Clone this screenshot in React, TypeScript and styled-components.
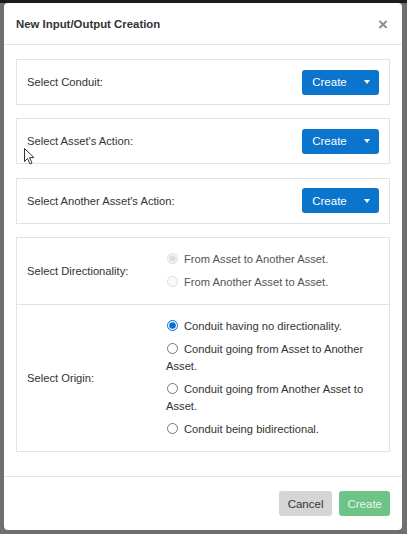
import React from 'react';
import styled, { createGlobalStyle } from 'styled-components';

const GlobalStyle = createGlobalStyle`
  html, body {
    margin: 0;
    padding: 0;
    background: #6f6f6f;
  }
  body {
    font-family: "Liberation Sans", Arial, sans-serif;
    color: #333;
  }
`;

const Backdrop = styled.div`
  position: relative;
  height: 534px;
  box-sizing: border-box;
  padding: 3px 5px 4px 4px;
  background: linear-gradient(#1c1c1c 0 3px, #6f6f6f 3px);
`;

const Modal = styled.div`
  display: flex;
  flex-direction: column;
  height: 100%;
  background: #fff;
  border-radius: 4px;
  overflow: hidden;
`;

const Header = styled.div`
  display: flex;
  align-items: center;
  justify-content: space-between;
  height: 42px;
  padding: 1px 14px 0 12px;
  box-sizing: border-box;
  border-bottom: 1px solid #e5e5e5;
`;

const Title = styled.h4`
  margin: 0;
  font-size: 11.4px;
  font-weight: bold;
  color: #333;
`;

const Close = styled.span`
  font-size: 17px;
  font-weight: bold;
  color: #8a8a8a;
  line-height: 1;
`;

const Body = styled.div`
  flex: 1;
  display: flex;
  flex-direction: column;
  gap: 13.3px;
  padding: 14px 12px 12px;
`;

const Panel = styled.div`
  display: flex;
  align-items: center;
  justify-content: space-between;
  height: 44px;
  padding: 0 10px 0 10px;
  border: 1px solid #e3e3e3;
`;

const Label = styled.span`
  font-size: 11.2px;
  color: #333;
`;

const Split = styled.div`
  display: flex;
  height: 25px;
  border-radius: 3px;
  overflow: hidden;
  background: #0b74cc;
`;

const SplitMain = styled.button`
  border: 0;
  background: transparent;
  color: #fff;
  font-family: inherit;
  font-size: 11.5px;
  width: 53px;
  padding: 0 0 0 2px;
`;

const SplitCaret = styled.button`
  border: 0;
  background: transparent;
  width: 24px;
  padding: 0;
  display: flex;
  align-items: center;
  justify-content: center;
  &::after {
    content: '';
    border-left: 3.5px solid transparent;
    border-right: 3.5px solid transparent;
    border-top: 4px solid #fff;
  }
`;

const Table = styled.div`
  border: 1px solid #e3e3e3;
`;

const Row = styled.div<{ $h: number }>`
  display: grid;
  grid-template-columns: 149px 1fr;
  align-items: center;
  min-height: ${p => p.$h}px;
  box-sizing: border-box;
  & + & {
    border-top: 1px solid #e3e3e3;
  }
`;

const RowLabel = styled(Label)`
  padding-left: 10px;
`;

const Options = styled.div`
  display: flex;
  flex-direction: column;
  gap: 6px;
  padding-right: 14px;
`;

const Option = styled.label<{ $disabled?: boolean }>`
  display: block;
  font-size: 11.2px;
  line-height: 17px;
  color: ${p => (p.$disabled ? '#555' : '#333')};
`;

const Radio = styled.input`
  width: 11px;
  height: 11px;
  margin: 0 6px 0 1px;
  vertical-align: -1px;
  accent-color: #0b6fd6;
  &:disabled {
    opacity: 0.7;
  }
`;

const Footer = styled.div`
  display: flex;
  justify-content: flex-end;
  align-items: center;
  gap: 7px;
  height: 53px;
  padding: 0 12px;
  border-top: 1px solid #e5e5e5;
`;

const FooterButton = styled.button<{ $kind: 'cancel' | 'create' }>`
  height: 25px;
  padding: 0 ${p => (p.$kind === 'cancel' ? 9 : 8)}px;
  border: 0;
  border-radius: 3px;
  font-family: inherit;
  font-size: 11.5px;
  background: ${p => (p.$kind === 'cancel' ? '#d5d5d5' : '#6dc486')};
  color: ${p => (p.$kind === 'cancel' ? '#333' : '#e8f6ec')};
`;

const Cursor = styled.svg`
  position: absolute;
  left: 24px;
  top: 148px;
`;

function CreateSplit() {
  return (
    <Split>
      <SplitMain>Create</SplitMain>
      <SplitCaret aria-label="more" />
    </Split>
  );
}

export default function App() {
  return (
    <>
      <GlobalStyle />
      <Backdrop>
        <Modal>
          <Header>
            <Title>New Input/Output Creation</Title>
            <Close>×</Close>
          </Header>
          <Body>
            <Panel>
              <Label>Select Conduit:</Label>
              <CreateSplit />
            </Panel>
            <Panel>
              <Label>Select Asset's Action:</Label>
              <CreateSplit />
            </Panel>
            <Panel>
              <Label>Select Another Asset's Action:</Label>
              <CreateSplit />
            </Panel>
            <Table>
              <Row $h={66}>
                <RowLabel>Select Directionality:</RowLabel>
                <Options>
                  <Option $disabled>
                    <Radio type="radio" name="dir" disabled defaultChecked />
                    From Asset to Another Asset.
                  </Option>
                  <Option $disabled>
                    <Radio type="radio" name="dir" disabled />
                    From Another Asset to Asset.
                  </Option>
                </Options>
              </Row>
              <Row $h={147}>
                <RowLabel>Select Origin:</RowLabel>
                <Options>
                  <Option>
                    <Radio type="radio" name="origin" defaultChecked />
                    Conduit having no directionality.
                  </Option>
                  <Option>
                    <Radio type="radio" name="origin" />
                    Conduit going from Asset to Another Asset.
                  </Option>
                  <Option>
                    <Radio type="radio" name="origin" />
                    Conduit going from Another Asset to Asset.
                  </Option>
                  <Option>
                    <Radio type="radio" name="origin" />
                    Conduit being bidirectional.
                  </Option>
                </Options>
              </Row>
            </Table>
          </Body>
          <Footer>
            <FooterButton $kind="cancel">Cancel</FooterButton>
            <FooterButton $kind="create">Create</FooterButton>
          </Footer>
        </Modal>
        <Cursor width="11" height="17" viewBox="0 0 11 17">
          <path d="M0.5 0.5 L0.5 13.5 L3.5 10.5 L6 16 L8 15 L5.6 9.6 L10 9.6 Z" fill="#fff" stroke="#333" strokeWidth="1" />
        </Cursor>
      </Backdrop>
    </>
  );
}
